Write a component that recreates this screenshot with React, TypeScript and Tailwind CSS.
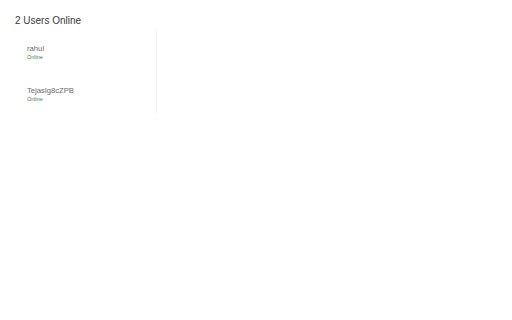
export default function App() {
  const users = ['rahul', 'Tejaslg8cZPB'];
  return (
    <div className="w-[512px] h-[320px] bg-white font-['Liberation_Sans',Arial,sans-serif]">
      <div className="pl-[15px] pt-[15px] text-[10px] leading-[12px] text-[#3a3a3a]">2 Users Online</div>
      <div className="mt-[4px] w-[157px] h-[83px] border-r border-[#f3f3f3] pt-[13px] flex flex-col gap-[25px]">
        {users.map((u) => (
          <div key={u} className="pl-[27px]">
            <div className="text-[7.7px] leading-[9px] text-[#6b6b6b]">{u}</div>
            <div className="mt-[1px] text-[5.5px] leading-[7px] text-[#3b8a3e]">Online</div>
          </div>
        ))}
      </div>
    </div>
  );
}
